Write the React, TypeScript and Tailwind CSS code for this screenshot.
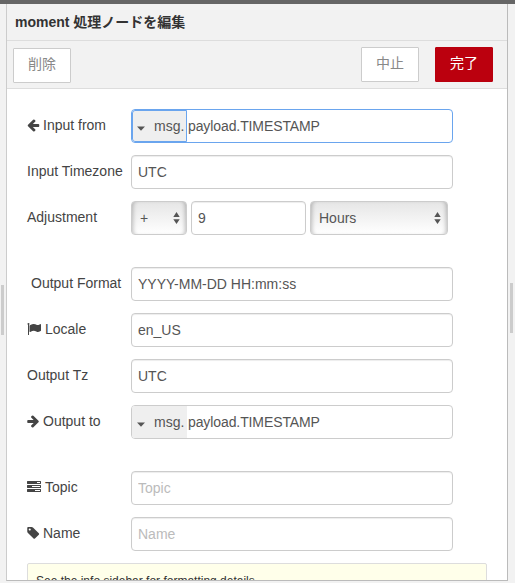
import type { ReactNode } from "react";

const ICONS = {
    arrowLeft:
        "M1664 896v128q0 53-32.5 90.5t-84.5 37.5h-704l293 294q38 36 38 90t-38 90l-75 76q-37 37-90 37-52 0-91-37l-651-652q-37-37-37-90 0-52 37-91l651-650q38-38 91-38 52 0 90 38l75 74q38 38 38 91t-38 91l-293 293h704q52 0 84.5 37.5t32.5 90.5z",
    arrowRight:
        "M1600 960q0 54-37 91l-651 651q-39 37-91 37-51 0-90-37l-75-75q-38-38-38-91t38-91l293-293h-704q-52 0-84.5-37.5t-32.5-90.5v-128q0-53 32.5-90.5t84.5-37.5h704l-293-294q-38-36-38-90t38-90l75-75q38-38 90-38 53 0 91 38l651 651q37 35 37 90z",
    flag: "M320 256q0 72-64 110v1266q0 13-9.5 22.5t-22.5 9.5h-64q-13 0-22.5-9.5t-9.5-22.5v-1266q-64-38-64-110 0-53 37.5-90.5t90.5-37.5 90.5 37.5 37.5 90.5zm1472 64v763q0 25-12.5 38.5t-39.5 27.5q-215 116-369 116-61 0-123.5-22t-108.5-48-115.5-48-142.5-22q-192 0-464 146-17 9-33 9-26 0-45-19t-19-45v-742q0-32 31-55 21-14 79-43 236-120 421-120 107 0 200 29t219 88q38 19 88 19 54 0 117.5-21t110-47 88-47 54.5-21q26 0 45 19t19 45z",
    tasks: "M1024 1408h640v-128h-640v128zm-384-512h1024v-128h-1024v128zm640-512h384v-128h-384v128zm512 832v256q0 26-19 45t-45 19h-1664q-26 0-45-19t-19-45v-256q0-26 19-45t45-19h1664q26 0 45 19t19 45zm0-512v256q0 26-19 45t-45 19h-1664q-26 0-45-19t-19-45v-256q0-26 19-45t45-19h1664q26 0 45 19t19 45zm0-512v256q0 26-19 45t-45 19h-1664q-26 0-45-19t-19-45v-256q0-26 19-45t45-19h1664q26 0 45 19t19 45z",
    tag: "M576 448q0-53-37.5-90.5t-90.5-37.5-90.5 37.5-37.5 90.5 37.5 90.5 90.5 37.5 90.5-37.5 37.5-90.5zm1067 576q0 53-37 90l-491 492q-39 37-91 37-53 0-90-37l-715-716q-38-37-64.5-101t-26.5-117v-416q0-52 38-90t90-38h416q53 0 117 26.5t102 64.5l715 714q37 39 37 91z",
};

type IconName = keyof typeof ICONS;

// flag and tasks use the full em width, the others are one pixel narrower
function Icon({ name }: { name: IconName }) {
    const wide = name === "flag" || name === "tasks";
    return (
        <svg
            className={wide ? "mr-1 h-[14px] w-[14px]" : "mr-[3px] h-[14px] w-[13px]"}
            viewBox={wide ? "0 0 1792 1792" : "96 0 1664 1792"}
            fill="currentColor"
            aria-hidden="true"
        >
            <path d={ICONS[name]} />
        </svg>
    );
}

function Row({ label, icon, indent, children }: { label: string; icon?: IconName; indent?: boolean; children: ReactNode }) {
    return (
        <div className="flex h-[34px] shrink-0">
            <label
                className={[
                    "flex h-8 w-[104px] shrink-0 items-center whitespace-nowrap text-[#444]",
                    indent ? "pl-[4px]" : "",
                ].join(" ")}
            >
                {icon && <Icon name={icon} />}
                {label}
            </label>
            {children}
        </div>
    );
}

function TextInput({ value, placeholder, className = "w-[322px]" }: { value?: string; placeholder?: string; className?: string }) {
    return (
        <input
            className={[
                "h-[34px] rounded-[4px] border border-[#ccc] bg-white px-[6px] text-[#555] shadow-[inset_0_1px_1px_rgba(0,0,0,0.075)] outline-none placeholder:text-[#bbb]",
                className,
            ].join(" ")}
            defaultValue={value}
            placeholder={placeholder}
        />
    );
}

function TypedInput({ value, focused }: { value: string; focused?: boolean }) {
    return (
        <div
            className={[
                "flex w-[322px] overflow-hidden rounded-[4px] border bg-white text-[#555]",
                focused ? "border-[#6aa5ee]" : "border-[#ccc]",
            ].join(" ")}
        >
            <button
                type="button"
                className={[
                    "flex w-[55px] items-center bg-[#efefef] pl-1",
                    focused ? "rounded-l-[3px] border border-[#6aa5ee]" : "border border-[#efefef]",
                ].join(" ")}
            >
                <svg className="mt-[5px] h-[5px] w-[8px] shrink-0" viewBox="0 0 8 5" fill="currentColor" aria-hidden="true">
                    <path d="M0 0.4h8L4 4.8z" />
                </svg>
                <span className="ml-[9px]">msg.</span>
            </button>
            <span className="flex items-center pl-px tracking-[-0.1px]">{value}</span>
        </div>
    );
}

function Select({ value, className }: { value: string; className: string }) {
    return (
        <div
            className={[
                "flex items-center justify-between rounded-[4px] border border-[#ccc] bg-linear-to-b from-[#e6e6e6] to-white pr-[6px] pl-2 text-[#555] shadow-[inset_4px_0_4px_-3px_rgba(0,0,0,0.25),inset_-4px_0_4px_-3px_rgba(0,0,0,0.25)]",
                className,
            ].join(" ")}
        >
            <span>{value}</span>
            <svg className="h-3 w-[7px]" viewBox="0 0 7 12" fill="currentColor" aria-hidden="true">
                <path d="M0.3 5L3.5 0l3.2 5zM0.3 7.2h6.4L3.5 12z" />
            </svg>
        </div>
    );
}

function ToolbarButton({ children, primary }: { children: ReactNode; primary?: boolean }) {
    return (
        <button
            type="button"
            className={[
                "h-[35px] w-[58px] rounded-[1px] border pb-[3px] text-sm",
                primary ? "border-[#b9000e] bg-[#bb000e] text-white" : "border-[#ccc] bg-white text-[#888]",
            ].join(" ")}
        >
            {children}
        </button>
    );
}

export default function App() {
    return (
        <div className="flex h-[583px] w-[515px] flex-col overflow-hidden bg-[#f2f2f2] font-['Liberation_Sans','Noto_Sans_CJK_JP',sans-serif] text-sm leading-5">
            <div className="h-1 shrink-0 bg-[#666]" />
            <div className="flex min-h-0 grow">
                <div className="flex w-[6px] shrink-0 pt-[281px] pl-px">
                    <div className="h-[50px] w-[3px] bg-[#ccc]" />
                </div>

                <main className="mb-[2px] flex w-[502px] shrink-0 flex-col border-r border-b border-l border-r-[#bbb] border-b-[#bbb] border-l-[#ccc]">
                    <h1 className="flex h-[37px] shrink-0 items-center border-b border-[#ddd] pb-px pl-2 font-bold text-[#333]">
                        moment 処理ノードを編集
                    </h1>
                    <div className="flex h-12 shrink-0 items-start border-b border-[#ddd] pr-[14px] pl-[6px]">
                        <div className="mt-[7px]">
                            <ToolbarButton>削除</ToolbarButton>
                        </div>
                        <div className="mt-[6px] ml-auto flex gap-4">
                            <ToolbarButton>中止</ToolbarButton>
                            <ToolbarButton primary>完了</ToolbarButton>
                        </div>
                    </div>

                    <form className="flex min-h-0 grow flex-col gap-3 overflow-hidden bg-white pt-5 pr-5 pl-5">
                        <Row label="Input from" icon="arrowLeft">
                            <TypedInput value="payload.TIMESTAMP" focused />
                        </Row>
                        <Row label="Input Timezone">
                            <TextInput value="UTC" />
                        </Row>
                        <Row label="Adjustment">
                            <div className="flex gap-1">
                                <Select value="+" className="w-14" />
                                <TextInput value="9" className="w-[115px]" />
                                <Select value="Hours" className="w-[138px]" />
                            </div>
                        </Row>
                        <div className="h-2 shrink-0" />
                        <Row label="Output Format" indent>
                            <TextInput value="YYYY-MM-DD HH:mm:ss" />
                        </Row>
                        <Row label="Locale" icon="flag">
                            <TextInput value="en_US" />
                        </Row>
                        <Row label="Output Tz">
                            <TextInput value="UTC" />
                        </Row>
                        <Row label="Output to" icon="arrowRight">
                            <TypedInput value="payload.TIMESTAMP" />
                        </Row>
                        <div className="h-2 shrink-0" />
                        <Row label="Topic" icon="tasks">
                            <TextInput placeholder="Topic" />
                        </Row>
                        <Row label="Name" icon="tag">
                            <TextInput placeholder="Name" />
                        </Row>
                        <div className="h-10 w-[460px] shrink-0 rounded-[2px] border border-[#ddd] bg-[#ffffea] px-2 pt-[9px] text-xs text-[#333]">
                            See the info sidebar for formatting details.
                        </div>
                    </form>
                </main>

                <div className="flex grow pt-[279px] pl-[2px]">
                    <div className="h-[50px] w-[3px] bg-[#ccc]" />
                </div>
            </div>
        </div>
    );
}
